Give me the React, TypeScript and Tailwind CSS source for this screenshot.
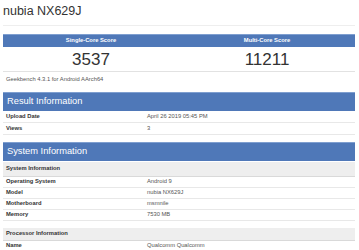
import React from 'react';

type Row = { label: string; value: string };

const resultRows: Row[] = [
  { label: 'Upload Date', value: 'April 26 2019 05:45 PM' },
  { label: 'Views', value: '3' },
];

const systemRows: Row[] = [
  { label: 'Operating System', value: 'Android 9' },
  { label: 'Model', value: 'nubia NX629J' },
  { label: 'Motherboard', value: 'msmnile' },
  { label: 'Memory', value: '7530 MB' },
];

function SectionHeader({ title }: { title: string }) {
  return (
    <div className="flex h-[19px] items-center border-t border-[#7f9fd0] bg-[#4f78b8] pl-[4px] text-[9.3px] leading-none text-white">
      {title}
    </div>
  );
}

function SubHeader({ title, h = 'h-[14px]' }: { title: string; h?: string }) {
  return (
    <div
      className={`flex ${h} items-center border-b border-[#d9d9d9] bg-[#eeeeee] pl-[3px] text-[5.8px] font-bold leading-none text-[#333]`}
    >
      {title}
    </div>
  );
}

function InfoRow({ row, h = 'h-[11px]' }: { row: Row; h?: string }) {
  return (
    <div className={`grid ${h} grid-cols-[141px_1fr] items-center border-b border-[#e8e8e8] text-[5.8px] leading-none`}>
      <div className="pl-[3px] font-bold text-[#333]">{row.label}</div>
      <div className="pl-[3px] text-[#555]">{row.value}</div>
    </div>
  );
}

export default function App() {
  return (
    <div className="h-[250px] w-[359px] overflow-hidden bg-white px-[3px] font-['Liberation_Sans',Arial,sans-serif]">
      <div className="w-[352px]">
        <h1 className="mt-[3px] text-[12.5px] leading-[16px] text-[#333]">nubia NX629J</h1>
        <div className="mt-[6px] h-px bg-[#eeeeee]" />

        <div className="mt-[8px] grid grid-cols-2 border-b border-[#e2e2e2]">
          <div className="flex h-[13px] items-center justify-center border-t border-[#7f9fd0] bg-[#4f78b8] text-[5.8px] font-bold leading-none text-white">
            Single-Core Score
          </div>
          <div className="flex h-[13px] items-center justify-center border-t border-[#7f9fd0] bg-[#4f78b8] text-[5.8px] font-bold leading-none text-white">
            Multi-Core Score
          </div>
          <div className="flex h-[24px] items-center justify-center text-[17px] leading-none text-[#333]">3537</div>
          <div className="flex h-[24px] items-center justify-center text-[17px] leading-none text-[#333]">11211</div>
        </div>
        <div className="mt-[4px] pl-[3px] text-[5.8px] leading-[6px] text-[#555]">
          Geekbench 4.3.1 for Android AArch64
        </div>

        <div className="mt-[10px]">
          <SectionHeader title="Result Information" />
          {resultRows.map((r) => (
            <InfoRow key={r.label} row={r} h="h-[12px]" />
          ))}
        </div>

        <div className="mt-[7px]">
          <SectionHeader title="System Information" />
          <div className="mt-px">
            <SubHeader title="System Information" h="h-[15px]" />
          </div>
          {systemRows.map((r) => (
            <InfoRow key={r.label} row={r} />
          ))}
          <div className="mt-[7px]">
            <SubHeader title="Processor Information" h="h-[13px]" />
            <InfoRow row={{ label: 'Name', value: 'Qualcomm Qualcomm' }} />
          </div>
        </div>
      </div>
    </div>
  );
}
